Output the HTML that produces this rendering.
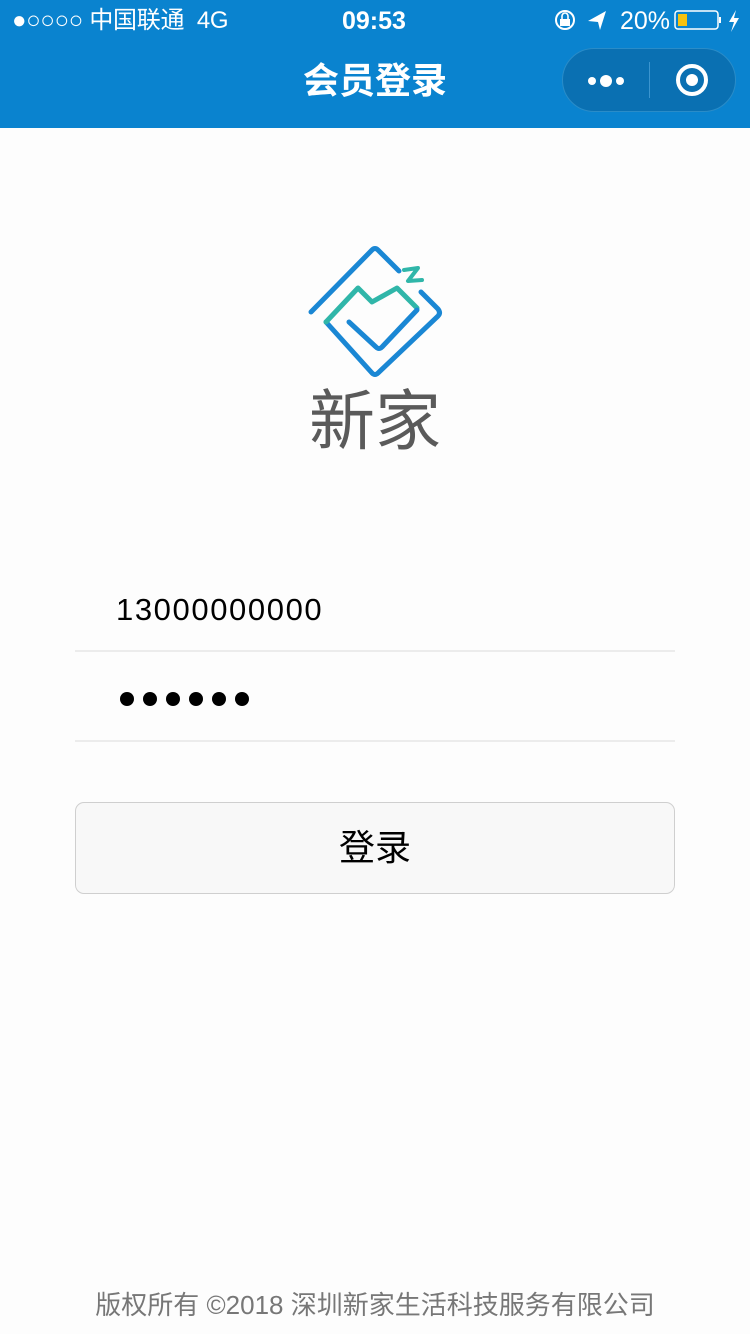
<!DOCTYPE html>
<html><head><meta charset="utf-8"><style>
*{margin:0;padding:0;box-sizing:border-box}
body{width:750px;height:1334px;background:#fdfdfd;font-family:"Liberation Sans","Noto Sans CJK SC",sans-serif;position:relative;overflow:hidden}
.hdr{position:absolute;left:0;top:0;width:750px;height:128px;background:#0a83cf;color:#fff}
.abs{position:absolute}
</style></head><body>
<div class="hdr">
  <div class="abs" style="left:12px;top:4px;font-size:24px;line-height:34px;white-space:nowrap;letter-spacing:-0.3px">●○○○○ 中国联通&nbsp;&nbsp;4G</div>
  <div class="abs" style="left:342px;top:4px;font-size:25px;line-height:34px;font-weight:bold">09:53</div>
  <svg class="abs" style="left:550px;top:6px" width="200" height="30" viewBox="0 0 200 30">
    <circle cx="15" cy="14" r="9" fill="none" stroke="#fff" stroke-width="2"/>
    <rect x="10" y="13" width="10" height="7" fill="#fff"/>
    <path d="M12 13v-3a3 3 0 0 1 6 0v3" fill="none" stroke="#fff" stroke-width="1.6"/>
    <path d="M38 15 L56 5 L50 24 L48 16 Z" fill="#fff"/>
    <text x="70" y="23" font-size="25" fill="#fff" font-family="Liberation Sans">20%</text>
    <rect x="125" y="5" width="43" height="18" rx="3" fill="none" stroke="#fff" stroke-width="1.5"/>
    <rect x="128" y="8" width="9" height="12" fill="#f6c10e"/>
    <rect x="169" y="11" width="2" height="6" fill="#fff"/>
    <path d="M186 4 L179 16 L184 16 L181 26 L189 12 L184 12 Z" fill="#fff"/>
  </svg>
  <div class="abs" style="left:0;width:750px;top:56px;text-align:center;font-size:36px;line-height:50px;font-weight:bold">会员登录</div>
  <div class="abs" style="left:562px;top:48px;width:174px;height:64px;border-radius:32px;background:#0a70b2;border:1px solid #2a8cc8"></div>
  <div class="abs" style="left:649px;top:62px;width:1px;height:36px;background:#3b95cf"></div>
  <svg class="abs" style="left:585px;top:68px" width="44" height="26"><circle cx="7" cy="13" r="4" fill="#fff"/><circle cx="21" cy="13" r="6" fill="#fff"/><circle cx="35" cy="13" r="4" fill="#fff"/></svg>
  <svg class="abs" style="left:672px;top:60px" width="40" height="40"><circle cx="20" cy="20" r="14" fill="none" stroke="#fff" stroke-width="4"/><circle cx="20" cy="20" r="6" fill="#fff"/></svg>
</div>

<svg class="abs" style="left:290px;top:230px" width="170" height="160" viewBox="290 230 170 160">
  <g fill="none" stroke-width="5" stroke-linecap="round" stroke-linejoin="round">
    <path d="M311 312 L372 250 Q375 247 378 250 L399 271" stroke="#1a87d4"/>
    <path d="M421 292 L438 309 Q441 313 438 316 L378 373 Q375 376 372 373 L326 322" stroke="#1a87d4"/>
    <path d="M326 322 L358 288 L372 302 L397 288 L417 308" stroke="#30b6a9"/>
    <path d="M417 310 L382 347 Q379 350 376 347 L349 322" stroke="#1a87d4"/>
    <path d="M404 270 L418 268 L408 281 L422 280" stroke="#30b6a9" stroke-width="4"/>
  </g>
</svg>
<div class="abs" style="left:290px;top:378px;width:170px;text-align:center;font-size:66px;line-height:76px;color:#5a5a5a;font-family:'Noto Sans CJK SC',sans-serif;font-weight:400">新家</div>

<div class="abs" style="left:116px;top:588px;font-size:31px;line-height:44px;color:#000;letter-spacing:1.6px">13000000000</div>
<div class="abs" style="left:75px;top:650px;width:600px;height:2px;background:#ececec"></div>
<svg class="abs" style="left:118px;top:688px" width="140" height="22">
  <circle cx="9" cy="11" r="7"/><circle cx="32" cy="11" r="7"/><circle cx="55" cy="11" r="7"/><circle cx="78" cy="11" r="7"/><circle cx="101" cy="11" r="7"/><circle cx="124" cy="11" r="7"/>
</svg>
<div class="abs" style="left:75px;top:740px;width:600px;height:2px;background:#ececec"></div>

<div class="abs" style="left:75px;top:802px;width:600px;height:92px;border:1.5px solid #cfcfcf;border-radius:9px;background:#f8f8f8;text-align:center;font-size:36px;line-height:89px;color:#000">登录</div>

<div class="abs" style="left:0;width:750px;top:1286px;text-align:center;font-size:26px;line-height:38px;color:#777;white-space:nowrap">版权所有 ©2018 深圳新家生活科技服务有限公司</div>
</body></html>
